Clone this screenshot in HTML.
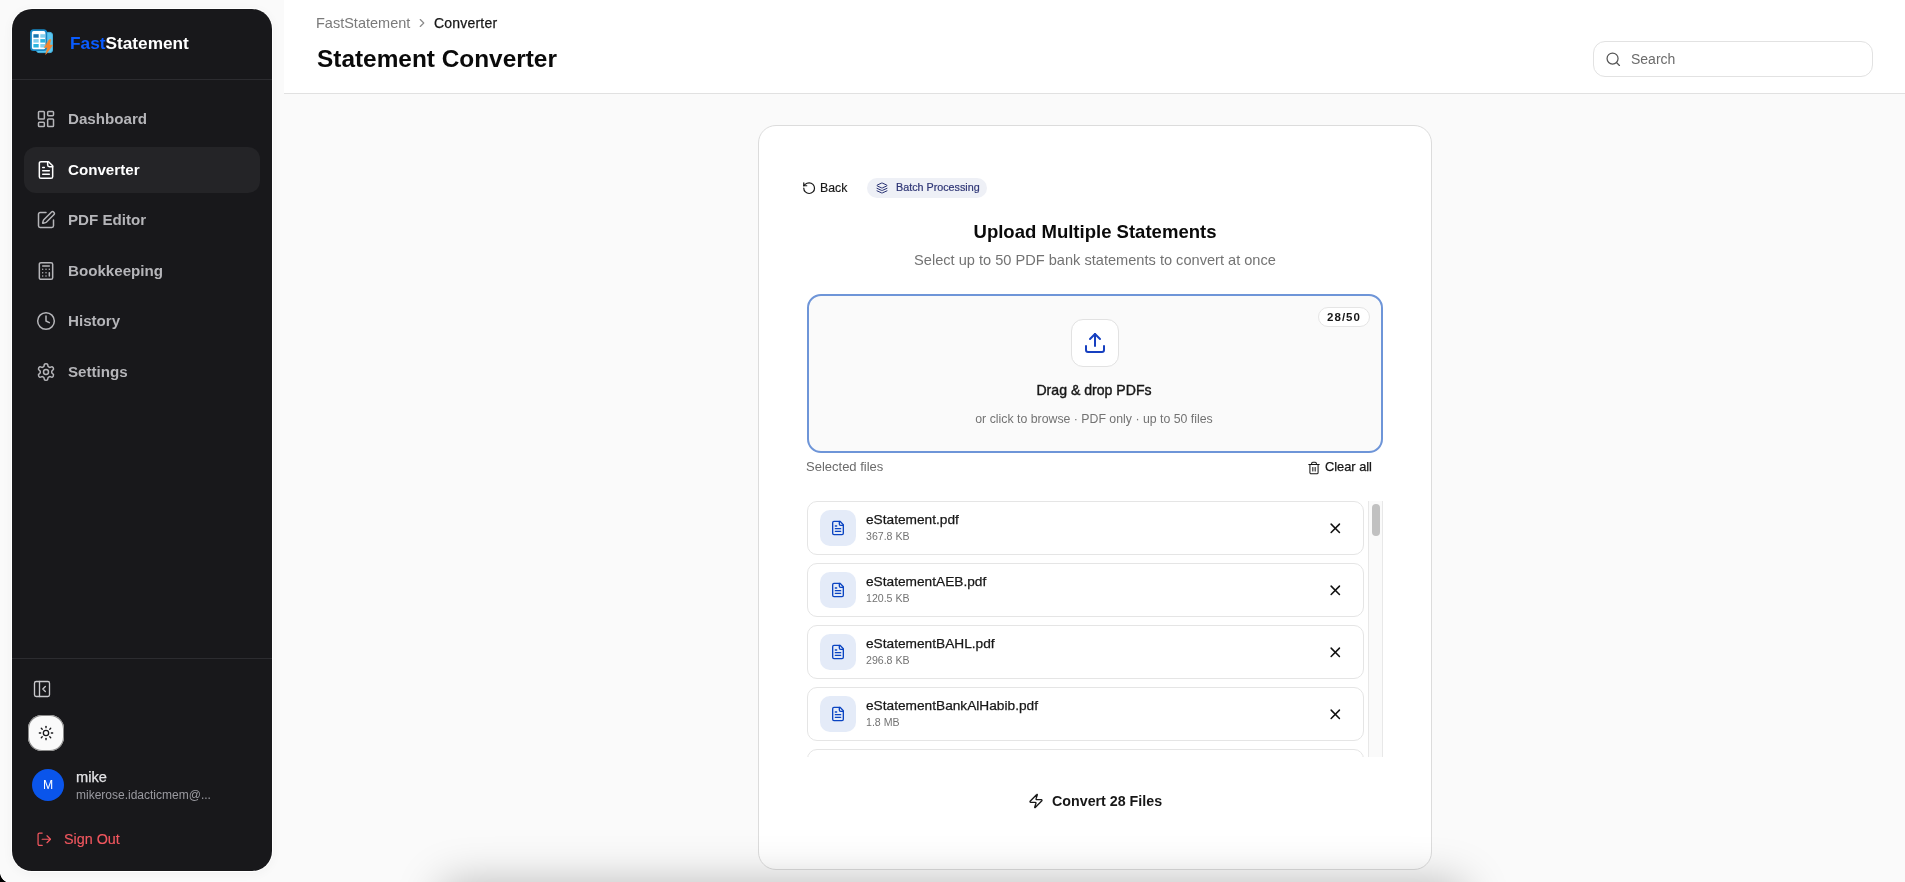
<!DOCTYPE html>
<html><head><meta charset="utf-8"><style>
*{box-sizing:border-box;margin:0;padding:0}
html,body{width:1905px;height:882px;overflow:hidden;background:#fafafa;font-family:"Liberation Sans",sans-serif;position:relative}
.abs{position:absolute}
svg{display:block;fill:none;stroke:currentColor;stroke-width:2;stroke-linecap:round;stroke-linejoin:round}
.t{position:absolute;white-space:nowrap;line-height:1;will-change:transform}
.bx{position:absolute}
</style></head><body>
<div class="bx" style="left:12px;top:9px;width:260px;height:862px;background:#18181b;border-radius:20px;box-shadow:0 0 0 1px #fff,0 2px 12px rgba(0,0,0,.045)"></div>
<svg class="abs" style="left:25px;top:24px;width:35px;height:36px" viewBox="0 0 35 36">
<rect x="11.5" y="8.4" width="16" height="20.2" rx="2.6" fill="#5cc6ef" stroke="#43b1e0" stroke-width="1"/>
<rect x="6" y="6.2" width="15.3" height="20" rx="2.6" fill="#fff" stroke="#1787c4" stroke-width="1.8"/>
<rect x="8.4" y="10.2" width="5.3" height="3.5" fill="#1a78b4" stroke="none"/>
<rect x="15.3" y="10.2" width="4.7" height="3.5" fill="#82d0ee" stroke="none"/>
<rect x="8.4" y="15.1" width="5.3" height="3.5" fill="#82d0ee" stroke="none"/>
<rect x="15.3" y="15.1" width="4.7" height="3.5" fill="#2ab5e0" stroke="none"/>
<rect x="8.4" y="20" width="5.3" height="3.5" fill="#2ab5e0" stroke="none"/>
<rect x="15.3" y="20" width="4.7" height="3.5" fill="#82d0ee" stroke="none"/>
<path d="M24.3 15.8 L25.9 15.6 L24.5 20.9 L27.6 21.2 L20.7 30.4 L22.5 23.6 L19.5 23.6 Z" fill="#f7842a" stroke="#f7842a" stroke-width=".6" stroke-linejoin="round"/>
</svg>
<div class="t" style="top:35.00px;font-size:17.25px;color:#ffffff;font-weight:700;left:69.6px;"><span style="color:#0a5cff">Fast</span>Statement</div>
<div class="bx" style="left:12px;top:79px;width:260px;height:1px;background:#2c2c30"></div>
<svg class="abs" style="left:36px;top:109px;width:20px;height:20px;color:#b5b5b9;stroke-width:1.8;" viewBox="0 0 24 24"><rect width="7" height="9" x="3" y="3" rx="1"/><rect width="7" height="5" x="14" y="3" rx="1"/><rect width="7" height="9" x="14" y="12" rx="1"/><rect width="7" height="5" x="3" y="16" rx="1"/></svg>
<div class="t" style="top:111.08px;font-size:15.15px;color:#b5b5b9;font-weight:700;left:67.6px;">Dashboard</div>
<div class="bx" style="left:24px;top:147px;width:236px;height:46px;border-radius:12px;background:#242427"></div>
<svg class="abs" style="left:36px;top:160px;width:20px;height:20px;color:#ffffff;stroke-width:1.8;" viewBox="0 0 24 24"><path d="M15 2H6a2 2 0 0 0-2 2v16a2 2 0 0 0 2 2h12a2 2 0 0 0 2-2V7Z"/><path d="M14 2v4a2 2 0 0 0 2 2h4"/><path d="M10 9H8"/><path d="M16 13H8"/><path d="M16 17H8"/></svg>
<div class="t" style="top:162.08px;font-size:15.15px;color:#ffffff;font-weight:700;left:67.6px;">Converter</div>
<svg class="abs" style="left:36px;top:210px;width:20px;height:20px;color:#b5b5b9;stroke-width:1.8;" viewBox="0 0 24 24"><path d="M12 3H5a2 2 0 0 0-2 2v14a2 2 0 0 0 2 2h14a2 2 0 0 0 2-2v-7"/><path d="M18.375 2.625a1 1 0 0 1 3 3l-9.013 9.014a2 2 0 0 1-.853.505l-2.873.84a.5.5 0 0 1-.62-.62l.84-2.873a2 2 0 0 1 .506-.852z"/></svg>
<div class="t" style="top:212.08px;font-size:15.15px;color:#b5b5b9;font-weight:700;left:67.6px;">PDF Editor</div>
<svg class="abs" style="left:36px;top:261px;width:20px;height:20px;color:#b5b5b9;stroke-width:1.8;" viewBox="0 0 24 24"><rect width="16" height="20" x="4" y="2" rx="2"/><line x1="8" x2="16" y1="6" y2="6"/><line x1="16" x2="16" y1="14" y2="18"/><path d="M16 10h.01"/><path d="M12 10h.01"/><path d="M8 10h.01"/><path d="M12 14h.01"/><path d="M8 14h.01"/><path d="M12 18h.01"/><path d="M8 18h.01"/></svg>
<div class="t" style="top:263.08px;font-size:15.15px;color:#b5b5b9;font-weight:700;left:67.6px;">Bookkeeping</div>
<svg class="abs" style="left:36px;top:311px;width:20px;height:20px;color:#b5b5b9;stroke-width:1.8;" viewBox="0 0 24 24"><circle cx="12" cy="12" r="10"/><polyline points="12 6 12 12 16 14"/></svg>
<div class="t" style="top:313.08px;font-size:15.15px;color:#b5b5b9;font-weight:700;left:67.6px;">History</div>
<svg class="abs" style="left:36px;top:362px;width:20px;height:20px;color:#b5b5b9;stroke-width:1.8;" viewBox="0 0 24 24"><path d="M12.22 2h-.44a2 2 0 0 0-2 2v.18a2 2 0 0 1-1 1.73l-.43.25a2 2 0 0 1-2 0l-.15-.08a2 2 0 0 0-2.73.73l-.22.38a2 2 0 0 0 .73 2.73l.15.1a2 2 0 0 1 1 1.72v.51a2 2 0 0 1-1 1.74l-.15.09a2 2 0 0 0-.73 2.73l.22.38a2 2 0 0 0 2.730.73l.15-.08a2 2 0 0 1 2 0l.43.25a2 2 0 0 1 1 1.73V20a2 2 0 0 0 2 2h.44a2 2 0 0 0 2-2v-.18a2 2 0 0 1 1-1.73l.43-.25a2 2 0 0 1 2 0l.15.08a2 2 0 0 0 2.73-.73l.22-.39a2 2 0 0 0-.73-2.73l-.15-.08a2 2 0 0 1-1-1.74v-.5a2 2 0 0 1 1-1.74l.15-.09a2 2 0 0 0 .73-2.73l-.22-.38a2 2 0 0 0-2.73-.73l-.15.08a2 2 0 0 1-2 0l-.43-.25a2 2 0 0 1-1-1.73V4a2 2 0 0 0-2-2z"/><circle cx="12" cy="12" r="3"/></svg>
<div class="t" style="top:364.08px;font-size:15.15px;color:#b5b5b9;font-weight:700;left:67.6px;">Settings</div>
<div class="bx" style="left:12px;top:658px;width:260px;height:1px;background:#2c2c30"></div>
<svg class="abs" style="left:32px;top:679px;width:20px;height:20px;color:#c8c8cc;stroke-width:1.6;" viewBox="0 0 24 24"><rect width="18" height="18" x="3" y="3" rx="2"/><path d="M9 3v18"/><path d="m16 15-3-3 3-3"/></svg>
<div class="bx" style="left:28px;top:715px;width:36px;height:36px;border-radius:14px;background:#fafafa;box-shadow:0 0 0 1px #8a8a8a inset"></div>
<svg class="abs" style="left:38px;top:725px;width:16px;height:16px;color:#18181b;stroke-width:2;" viewBox="0 0 24 24"><circle cx="12" cy="12" r="4"/><path d="M12 2v2"/><path d="M12 20v2"/><path d="m4.93 4.93 1.41 1.41"/><path d="m17.66 17.66 1.41 1.41"/><path d="M2 12h2"/><path d="M20 12h2"/><path d="m6.34 17.66-1.41 1.41"/><path d="m19.07 4.93-1.41 1.41"/></svg>
<div class="bx" style="left:32px;top:769px;width:32px;height:32px;border-radius:50%;background:#0a55eb"></div>
<div class="t" style="top:778.67px;font-size:12.2px;color:#fff;font-weight:400;left:48px;transform:translateX(-50%);">M</div>
<div class="t" style="top:770.14px;font-size:14.6px;color:#e4e4e7;font-weight:400;-webkit-text-stroke:0.25px #e4e4e7;left:76.3px;">mike</div>
<div class="t" style="top:788.54px;font-size:12px;color:#9a9aa0;font-weight:400;left:76.3px;">mikerose.idacticmem@...</div>
<svg class="abs" style="left:35.7px;top:830.7px;width:16.5px;height:16.5px;color:#f2575f;stroke-width:1.8;" viewBox="0 0 24 24"><path d="M9 21H5a2 2 0 0 1-2-2V5a2 2 0 0 1 2-2h4"/><polyline points="16 17 21 12 16 7"/><line x1="21" x2="9" y1="12" y2="12"/></svg>
<div class="t" style="top:831.85px;font-size:14.35px;color:#f2575f;font-weight:400;-webkit-text-stroke:0.15px #f2575f;left:63.8px;">Sign Out</div>
<div class="bx" style="left:0;top:872px;width:11px;height:10px;background:radial-gradient(circle at 100% 0,transparent 10.6px,#000 11.4px)"></div>
<div class="bx" style="left:284px;top:0;width:1621px;height:94px;background:#fff;border-bottom:1px solid #e1e1e1"></div>
<div class="t" style="top:15.83px;font-size:14.5px;color:#7a7a7a;font-weight:400;left:315.8px;">FastStatement</div>
<svg class="abs" style="left:415px;top:16px;width:14px;height:14px;color:#8a8a8a;stroke-width:2;" viewBox="0 0 24 24"><path d="m9 18 6-6-6-6"/></svg>
<div class="t" style="top:16.25px;font-size:14px;color:#171717;font-weight:400;-webkit-text-stroke:0.25px #171717;letter-spacing:0.2px;left:433.8px;">Converter</div>
<div class="t" style="top:47.35px;font-size:24.4px;color:#0a0a0a;font-weight:700;left:317.2px;">Statement Converter</div>
<div class="bx" style="left:1593px;top:41px;width:280px;height:36px;border:1px solid #e2e2e2;border-radius:12px;background:#fff"></div>
<svg class="abs" style="left:1604.7px;top:50.5px;width:16.5px;height:16.5px;color:#555;stroke-width:1.8;" viewBox="0 0 24 24"><circle cx="11" cy="11" r="8"/><path d="m21 21-4.3-4.3"/></svg>
<div class="t" style="top:51.85px;font-size:14px;color:#6b6b6b;font-weight:400;left:1630.7px;">Search</div>
<div class="bx" style="left:758px;top:125px;width:674px;height:745px;background:#fff;border:1px solid #dcdcdc;border-radius:18px"></div>
<svg class="abs" style="left:801.8px;top:180.7px;width:14.3px;height:14.3px;color:#171717;stroke-width:2;" viewBox="0 0 24 24"><path d="M3 12a9 9 0 1 0 9-9 9.75 9.75 0 0 0-6.74 2.74L3 8"/><path d="M3 3v5h5"/></svg>
<div class="t" style="top:182.19px;font-size:12.3px;color:#171717;font-weight:400;-webkit-text-stroke:0.15px #171717;left:820px;">Back</div>
<div class="bx" style="left:867px;top:178px;width:120px;height:20px;border-radius:10px;background:#eef0f6"></div>
<svg class="abs" style="left:876px;top:182px;width:12px;height:12px;color:#283172;stroke-width:2;" viewBox="0 0 24 24"><path d="m12.83 2.18a2 2 0 0 0-1.66 0L2.6 6.08a1 1 0 0 0 0 1.83l8.58 3.91a2 2 0 0 0 1.66 0l8.58-3.9a1 1 0 0 0 0-1.83Z"/><path d="m22 17.65-9.17 4.16a2 2 0 0 1-1.66 0L2 17.65"/><path d="m22 12.65-9.17 4.16a2 2 0 0 1-1.66 0L2 12.65"/></svg>
<div class="t" style="top:181.90px;font-size:10.75px;color:#2e3575;font-weight:400;-webkit-text-stroke:0.2px #2e3575;left:896.4px;">Batch Processing</div>
<div class="t" style="top:222.90px;font-size:18.55px;color:#0a0a0a;font-weight:700;left:1094.5px;transform:translateX(-50%);">Upload Multiple Statements</div>
<div class="t" style="top:252.84px;font-size:14.6px;color:#737373;font-weight:400;left:1094.5px;transform:translateX(-50%);">Select up to 50 PDF bank statements to convert at once</div>
<div class="bx" style="left:807px;top:294px;width:576px;height:159px;border:2px solid #6e95d8;border-radius:14px;background:#fafafa"></div>
<div class="bx" style="left:1318px;top:307px;width:52px;height:20px;border:1px solid #e5e5e5;border-radius:10px;background:#fff"></div>
<div class="t" style="top:312.27px;font-size:11.5px;color:#171717;font-weight:700;letter-spacing:1.0px;left:1344px;transform:translateX(-50%);">28/50</div>
<div class="bx" style="left:1071px;top:319px;width:48px;height:48px;border:1px solid #e2e2e2;border-radius:12px;background:#fff"></div>
<svg class="abs" style="left:1083px;top:331px;width:24px;height:24px;color:#1740c0;stroke-width:2;" viewBox="0 0 24 24"><path d="M21 15v4a2 2 0 0 1-2 2H5a2 2 0 0 1-2-2v-4"/><polyline points="17 8 12 3 7 8"/><line x1="12" x2="12" y1="3" y2="15"/></svg>
<div class="t" style="top:383.16px;font-size:14.1px;color:#171717;font-weight:400;-webkit-text-stroke:0.4px #171717;left:1094.4px;transform:translateX(-50%);">Drag &amp; drop PDFs</div>
<div class="t" style="top:412.87px;font-size:12.32px;color:#737373;font-weight:400;left:1094.3px;transform:translateX(-50%);">or click to browse · PDF only · up to 50 files</div>
<div class="t" style="top:460.00px;font-size:13px;color:#6b6b6b;font-weight:400;left:806.0px;">Selected files</div>
<svg class="abs" style="left:1307px;top:460.5px;width:14px;height:14px;color:#171717;stroke-width:1.8;" viewBox="0 0 24 24"><path d="M3 6h18"/><path d="M19 6v14c0 1-1 2-2 2H7c-1 0-2-1-2-2V6"/><path d="M8 6V4c0-1 1-2 2-2h4c1 0 2 1 2 2v2"/><line x1="10" x2="10" y1="11" y2="17"/><line x1="14" x2="14" y1="11" y2="17"/></svg>
<div class="t" style="top:460.76px;font-size:12.8px;color:#171717;font-weight:400;-webkit-text-stroke:0.25px #171717;left:1325.4px;">Clear all</div>
<div class="bx" style="left:807px;top:501px;width:576px;height:256px;overflow:hidden">
<div class="bx" style="left:0;top:0px;width:557px;height:54px;border:1px solid #e5e5e5;border-radius:10px;background:#fff"><div class="bx" style="left:12px;top:8px;width:36px;height:36px;border-radius:10px;background:#e4ebf8"></div><svg class="abs" style="left:22px;top:18px;width:16px;height:16px;color:#0a44c2;stroke-width:2" viewBox="0 0 24 24"><path d="M15 2H6a2 2 0 0 0-2 2v16a2 2 0 0 0 2 2h12a2 2 0 0 0 2-2V7Z"/><path d="M14 2v4a2 2 0 0 0 2 2h4"/><path d="M10 9H8"/><path d="M16 13H8"/><path d="M16 17H8"/></svg></div>
<div class="t" style="top:12.30px;font-size:13.7px;color:#171717;font-weight:400;-webkit-text-stroke:0.25px #171717;left:59.2px;">eStatement.pdf</div>
<div class="t" style="top:30.03px;font-size:10.6px;color:#737373;font-weight:400;left:59.4px;">367.8 KB</div>
<svg class="abs" style="left:519.7px;top:18.6px;width:16.6px;height:16.6px;color:#111;stroke-width:2.2" viewBox="0 0 24 24"><path d="M18 6 6 18"/><path d="m6 6 12 12"/></svg>
<div class="bx" style="left:0;top:62px;width:557px;height:54px;border:1px solid #e5e5e5;border-radius:10px;background:#fff"><div class="bx" style="left:12px;top:8px;width:36px;height:36px;border-radius:10px;background:#e4ebf8"></div><svg class="abs" style="left:22px;top:18px;width:16px;height:16px;color:#0a44c2;stroke-width:2" viewBox="0 0 24 24"><path d="M15 2H6a2 2 0 0 0-2 2v16a2 2 0 0 0 2 2h12a2 2 0 0 0 2-2V7Z"/><path d="M14 2v4a2 2 0 0 0 2 2h4"/><path d="M10 9H8"/><path d="M16 13H8"/><path d="M16 17H8"/></svg></div>
<div class="t" style="top:74.30px;font-size:13.7px;color:#171717;font-weight:400;-webkit-text-stroke:0.25px #171717;left:59.2px;">eStatementAEB.pdf</div>
<div class="t" style="top:92.03px;font-size:10.6px;color:#737373;font-weight:400;left:59.4px;">120.5 KB</div>
<svg class="abs" style="left:519.7px;top:80.6px;width:16.6px;height:16.6px;color:#111;stroke-width:2.2" viewBox="0 0 24 24"><path d="M18 6 6 18"/><path d="m6 6 12 12"/></svg>
<div class="bx" style="left:0;top:124px;width:557px;height:54px;border:1px solid #e5e5e5;border-radius:10px;background:#fff"><div class="bx" style="left:12px;top:8px;width:36px;height:36px;border-radius:10px;background:#e4ebf8"></div><svg class="abs" style="left:22px;top:18px;width:16px;height:16px;color:#0a44c2;stroke-width:2" viewBox="0 0 24 24"><path d="M15 2H6a2 2 0 0 0-2 2v16a2 2 0 0 0 2 2h12a2 2 0 0 0 2-2V7Z"/><path d="M14 2v4a2 2 0 0 0 2 2h4"/><path d="M10 9H8"/><path d="M16 13H8"/><path d="M16 17H8"/></svg></div>
<div class="t" style="top:136.30px;font-size:13.7px;color:#171717;font-weight:400;-webkit-text-stroke:0.25px #171717;left:59.2px;">eStatementBAHL.pdf</div>
<div class="t" style="top:154.03px;font-size:10.6px;color:#737373;font-weight:400;left:59.4px;">296.8 KB</div>
<svg class="abs" style="left:519.7px;top:142.6px;width:16.6px;height:16.6px;color:#111;stroke-width:2.2" viewBox="0 0 24 24"><path d="M18 6 6 18"/><path d="m6 6 12 12"/></svg>
<div class="bx" style="left:0;top:186px;width:557px;height:54px;border:1px solid #e5e5e5;border-radius:10px;background:#fff"><div class="bx" style="left:12px;top:8px;width:36px;height:36px;border-radius:10px;background:#e4ebf8"></div><svg class="abs" style="left:22px;top:18px;width:16px;height:16px;color:#0a44c2;stroke-width:2" viewBox="0 0 24 24"><path d="M15 2H6a2 2 0 0 0-2 2v16a2 2 0 0 0 2 2h12a2 2 0 0 0 2-2V7Z"/><path d="M14 2v4a2 2 0 0 0 2 2h4"/><path d="M10 9H8"/><path d="M16 13H8"/><path d="M16 17H8"/></svg></div>
<div class="t" style="top:198.30px;font-size:13.7px;color:#171717;font-weight:400;-webkit-text-stroke:0.25px #171717;left:59.2px;">eStatementBankAlHabib.pdf</div>
<div class="t" style="top:216.03px;font-size:10.6px;color:#737373;font-weight:400;left:59.4px;">1.8 MB</div>
<svg class="abs" style="left:519.7px;top:204.6px;width:16.6px;height:16.6px;color:#111;stroke-width:2.2" viewBox="0 0 24 24"><path d="M18 6 6 18"/><path d="m6 6 12 12"/></svg>
<div class="bx" style="left:0;top:248px;width:557px;height:54px;border:1px solid #e5e5e5;border-radius:10px;background:#fff"><div class="bx" style="left:12px;top:8px;width:36px;height:36px;border-radius:10px;background:#e4ebf8"></div><svg class="abs" style="left:22px;top:18px;width:16px;height:16px;color:#0a44c2;stroke-width:2" viewBox="0 0 24 24"><path d="M15 2H6a2 2 0 0 0-2 2v16a2 2 0 0 0 2 2h12a2 2 0 0 0 2-2V7Z"/><path d="M14 2v4a2 2 0 0 0 2 2h4"/><path d="M10 9H8"/><path d="M16 13H8"/><path d="M16 17H8"/></svg></div>
<div class="t" style="top:260.30px;font-size:13.7px;color:#171717;font-weight:400;-webkit-text-stroke:0.25px #171717;left:59.2px;">eStatementX.pdf</div>
<div class="t" style="top:278.03px;font-size:10.6px;color:#737373;font-weight:400;left:59.4px;">1.0 MB</div>
<svg class="abs" style="left:519.7px;top:266.6px;width:16.6px;height:16.6px;color:#111;stroke-width:2.2" viewBox="0 0 24 24"><path d="M18 6 6 18"/><path d="m6 6 12 12"/></svg>
<div class="bx" style="left:561px;top:0;width:15px;height:256px;background:#fafafa;border-left:1px solid #e8e8e8;border-right:1px solid #e8e8e8"></div>
<div class="bx" style="left:565px;top:3px;width:8px;height:32px;border-radius:4px;background:#c1c1c1"></div>
</div>
<svg class="abs" style="left:1028px;top:793px;width:16px;height:16px;color:#171717;stroke-width:2;" viewBox="0 0 24 24"><path d="M4 14a1 1 0 0 1-.78-1.63l9.9-10.2a.5.5 0 0 1 .86.46l-1.92 6.02A1 1 0 0 0 13 10h7a1 1 0 0 1 .78 1.63l-9.9 10.2a.5.5 0 0 1-.86-.46l1.92-6.02A1 1 0 0 0 11 14z"/></svg>
<div class="t" style="top:793.84px;font-size:14.25px;color:#171717;font-weight:700;left:1051.9px;">Convert 28 Files</div>
<div class="bx" style="left:440px;top:882px;width:1026px;height:100px;border-radius:16px;background:#fff;box-shadow:0 0 44px 0 rgba(0,0,0,.25)"></div>
</body></html>
